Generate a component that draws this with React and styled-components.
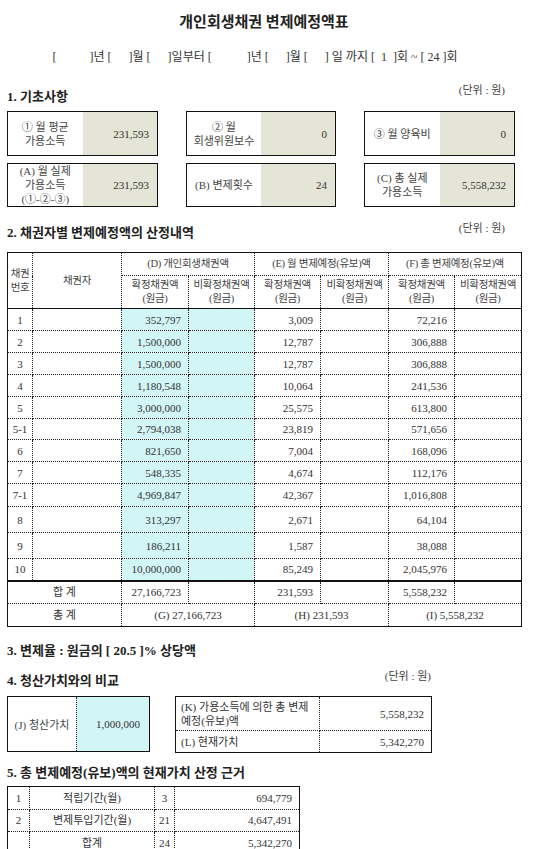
import React from "react";
import styled, { createGlobalStyle } from "styled-components";

const Global = createGlobalStyle`
  html, body { margin: 0; padding: 0; background: #fff; }
  body { font-family: "Liberation Serif", "Noto Sans CJK KR", serif; color: #333; }
`;

const Page = styled.div`
  width: 514px;
  padding: 0 7px 20px;
`;

const Title = styled.h1`
  margin: 0;
  padding-top: 12px;
  font-size: 15px;
  line-height: 20px;
  font-weight: bold;
  text-align: center;
  color: #222;
`;

const DateLine = styled.div`
  margin-top: 17px;
  padding-right: 18px;
  font-size: 12px;
  line-height: 16px;
  text-align: center;
  color: #333;
  white-space: nowrap;
`;

const Blank = styled.span`
  display: inline-block;
  width: ${(p) => p.$w}px;
`;

const SectionHead = styled.div`
  display: flex;
  justify-content: space-between;
  align-items: flex-start;
  margin-top: ${(p) => p.$mt}px;
  max-width: ${(p) => (p.$maxW ? `${p.$maxW}px` : "none")};
`;

const Heading = styled.h2`
  margin: 0;
  padding-top: ${(p) => p.$pt || 0}px;
  font-size: 13px;
  line-height: 16px;
  font-weight: bold;
  color: #222;
`;

const Unit = styled.span`
  font-size: 11px;
  line-height: 14px;
  color: #444;
  padding-right: ${(p) => p.$pr || 0}px;
`;

const BoxGrid = styled.div`
  margin-top: 6px;
  display: grid;
  grid-template-columns: 151px 150px 151px;
  grid-template-rows: 45px 44px;
  column-gap: 28px;
  row-gap: 7px;
`;

const InfoBox = styled.div`
  display: grid;
  grid-template-columns: 1fr 1fr;
  border: 1.5px solid #111;
  box-sizing: border-box;
`;

const BoxLabel = styled.div`
  display: flex;
  align-items: center;
  justify-content: center;
  text-align: center;
  font-size: 11px;
  line-height: 14px;
  color: #444;
  white-space: pre-line;
`;

const BoxValue = styled.div`
  display: flex;
  align-items: center;
  justify-content: flex-end;
  padding-right: 8px;
  background: #e4e5d7;
  font-size: 11px;
  color: #333;
`;

const Table = styled.table`
  margin-top: ${(p) => p.$mt}px;
  border-collapse: collapse;
  table-layout: fixed;
  width: ${(p) => p.$w}px;
  border: 1.5px solid #111;
  font-size: 11px;
  line-height: 14px;
`;

const Row = styled.tr`
  height: ${(p) => p.$h}px;
`;

const Cell = styled.td`
  border: 1px dotted #222;
  border-top: ${(p) =>
    p.$top === "thick" ? "2.5px solid #111" : p.$top === "solid" ? "1px solid #111" : "1px dotted #222"};
  padding: ${(p) =>
    p.$head ? "0" : `0 ${p.$align === "right" ? "7px" : "3px"} 0 ${p.$align === "left" ? "5px" : "3px"}`};
  text-align: ${(p) => p.$align || "center"};
  vertical-align: middle;
  background: ${(p) => p.$bg || "transparent"};
  color: ${(p) => (p.$head ? "#444" : "#333")};
  font-size: ${(p) => (p.$head ? "10.5px" : "11px")};
  letter-spacing: ${(p) => (p.$head ? "-0.3px" : "0")};
  white-space: ${(p) => (p.$head ? "pre" : "pre-line")};
  overflow: hidden;
`;

const CompareRow = styled.div`
  margin-top: 7px;
  display: flex;
  gap: 25px;
  align-items: flex-start;
`;

const LiqBox = styled.div`
  width: 143px;
  height: 56px;
  box-sizing: border-box;
  border: 1.5px solid #111;
  display: grid;
  grid-template-columns: 69px 1fr;
  font-size: 11px;
`;

const LiqLabel = styled.div`
  display: flex;
  align-items: center;
  justify-content: center;
  color: #444;
  border-right: 1px dotted #222;
`;

const LiqValue = styled.div`
  display: flex;
  align-items: center;
  justify-content: flex-end;
  padding-right: 9px;
  background: #d2f5f5;
  color: #333;
`;

const CYAN = "#d2f5f5";

const boxes = [
  ["① 월 평균\n가용소득", "231,593"],
  ["② 월\n회생위원보수", "0"],
  ["③ 월 양육비", "0"],
  ["(A) 월 실제\n가용소득\n(①-②-③)", "231,593"],
  ["(B) 변제횟수", "24"],
  ["(C) 총 실제\n가용소득", "5,558,232"],
];

const rows = [
  ["1", "352,797", "3,009", "72,216", 22],
  ["2", "1,500,000", "12,787", "306,888", 22],
  ["3", "1,500,000", "12,787", "306,888", 22],
  ["4", "1,180,548", "10,064", "241,536", 22],
  ["5", "3,000,000", "25,575", "613,800", 22],
  ["5-1", "2,794,038", "23,819", "571,656", 21],
  ["6", "821,650", "7,004", "168,096", 22],
  ["7", "548,335", "4,674", "112,176", 22],
  ["7-1", "4,969,847", "42,367", "1,016,808", 23],
  ["8", "313,297", "2,671", "64,104", 26],
  ["9", "186,211", "1,587", "38,088", 26],
  ["10", "10,000,000", "85,249", "2,045,976", 22],
];

const cols = [25, 89, 67, 66, 66, 68, 66, 67];

const pvRows = [
  ["1", "적립기간(월)", "3", "694,779"],
  ["2", "변제투입기간(월)", "21", "4,647,491"],
  ["", "합계", "24", "5,342,270"],
];

export default function App() {
  return (
    <>
      <Global />
      <Page>
        <Title>개인회생채권 변제예정액표</Title>
        <DateLine>
          [<Blank $w={33} />]년 [<Blank $w={17} />]월 [<Blank $w={17} />]일부터 [<Blank $w={35} />]년 [
          <Blank $w={17} />]월 [<Blank $w={17} />] 일 까지 [&nbsp; 1 &nbsp;]회 ~ [ 24 ]회
        </DateLine>

        <SectionHead $mt={18}>
          <Heading $pt={6}>1. 기초사항</Heading>
          <Unit $pr={16}>(단위 : 원)</Unit>
        </SectionHead>
        <BoxGrid>
          {boxes.map(([l, v]) => (
            <InfoBox key={l}>
              <BoxLabel>{l}</BoxLabel>
              <BoxValue>{v}</BoxValue>
            </InfoBox>
          ))}
        </BoxGrid>

        <SectionHead $mt={14}>
          <Heading $pt={4}>2. 채권자별 변제예정액의 산정내역</Heading>
          <Unit $pr={16}>(단위 : 원)</Unit>
        </SectionHead>
        <Table $mt={11} $w={514}>
          <colgroup>
            {cols.map((w, i) => (
              <col key={i} style={{ width: w }} />
            ))}
          </colgroup>
          <tbody>
            <Row $h={23}>
              <Cell $head rowSpan={2}>{"채권\n번호"}</Cell>
              <Cell $head rowSpan={2}>채권자</Cell>
              <Cell $head colSpan={2}>(D) 개인회생채권액</Cell>
              <Cell $head colSpan={2}>(E) 월 변제예정(유보)액</Cell>
              <Cell $head colSpan={2}>(F) 총 변제예정(유보)액</Cell>
            </Row>
            <Row $h={33}>
              {[0, 1, 2].map((i) => (
                <React.Fragment key={i}>
                  <Cell $head>{"확정채권액\n(원금)"}</Cell>
                  <Cell $head>{"비확정채권액\n(원금)"}</Cell>
                </React.Fragment>
              ))}
            </Row>
            {rows.map(([no, d, e, f, h], idx) => (
              <Row key={no} $h={h}>
                <Cell $top={idx === 0 ? "solid" : undefined}>{no}</Cell>
                <Cell $top={idx === 0 ? "solid" : undefined} />
                <Cell $top={idx === 0 ? "solid" : undefined} $align="right" $bg={CYAN}>{d}</Cell>
                <Cell $top={idx === 0 ? "solid" : undefined} $bg={CYAN} />
                <Cell $top={idx === 0 ? "solid" : undefined} $align="right">{e}</Cell>
                <Cell $top={idx === 0 ? "solid" : undefined} />
                <Cell $top={idx === 0 ? "solid" : undefined} $align="right">{f}</Cell>
                <Cell $top={idx === 0 ? "solid" : undefined} />
              </Row>
            ))}
            <Row $h={23}>
              <Cell $top="thick" colSpan={2}>합 계</Cell>
              <Cell $top="thick" $align="right">27,166,723</Cell>
              <Cell $top="thick" />
              <Cell $top="thick" $align="right">231,593</Cell>
              <Cell $top="thick" />
              <Cell $top="thick" $align="right">5,558,232</Cell>
              <Cell $top="thick" />
            </Row>
            <Row $h={23}>
              <Cell colSpan={2}>총 계</Cell>
              <Cell colSpan={2}>(G) 27,166,723</Cell>
              <Cell colSpan={2}>(H) 231,593</Cell>
              <Cell colSpan={2}>(I) 5,558,232</Cell>
            </Row>
          </tbody>
        </Table>

        <SectionHead $mt={16}>
          <Heading>3. 변제율 : 원금의 [ 20.5 ]% 상당액</Heading>
        </SectionHead>

        <SectionHead $mt={10} $maxW={424}>
          <Heading $pt={4}>4. 청산가치와의 비교</Heading>
          <Unit>(단위 : 원)</Unit>
        </SectionHead>
        <CompareRow>
          <LiqBox>
            <LiqLabel>(J) 청산가치</LiqLabel>
            <LiqValue>1,000,000</LiqValue>
          </LiqBox>
          <Table $mt={0} $w={256}>
            <colgroup>
              <col style={{ width: 144 }} />
              <col style={{ width: 112 }} />
            </colgroup>
            <tbody>
              <Row $h={34}>
                <Cell $align="left">{"(K) 가용소득에 의한 총 변제\n예정(유보)액"}</Cell>
                <Cell $align="right">5,558,232</Cell>
              </Row>
              <Row $h={22}>
                <Cell $align="left">(L) 현재가치</Cell>
                <Cell $align="right">5,342,270</Cell>
              </Row>
            </tbody>
          </Table>
        </CompareRow>

        <SectionHead $mt={12}>
          <Heading>5. 총 변제예정(유보)액의 현재가치 산정 근거</Heading>
        </SectionHead>
        <Table $mt={5} $w={292}>
          <colgroup>
            <col style={{ width: 22 }} />
            <col style={{ width: 125 }} />
            <col style={{ width: 20 }} />
            <col style={{ width: 125 }} />
          </colgroup>
          <tbody>
            {pvRows.map(([a, b, c, d], i) => (
              <Row key={i} $h={22.5}>
                <Cell>{a}</Cell>
                <Cell>{b}</Cell>
                <Cell>{c}</Cell>
                <Cell $align="right">{d}</Cell>
              </Row>
            ))}
          </tbody>
        </Table>
      </Page>
    </>
  );
}
